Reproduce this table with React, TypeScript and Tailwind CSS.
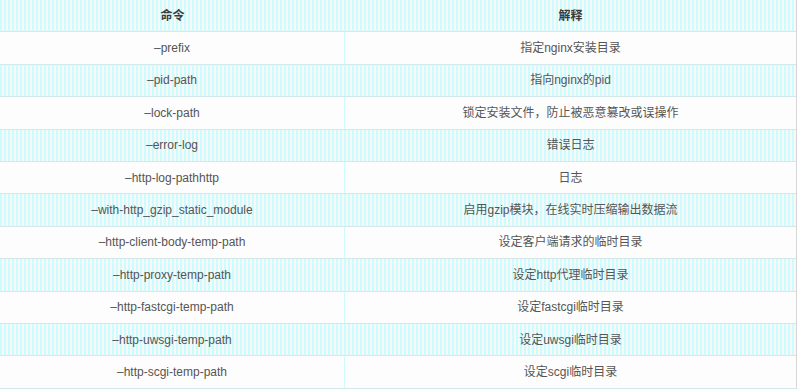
import React from "react";

const rows: [string, string][] = [
  ["–prefix", "指定nginx安装目录"],
  ["–pid-path", "指向nginx的pid"],
  ["–lock-path", "锁定安装文件，防止被恶意篡改或误操作"],
  ["–error-log", "错误日志"],
  ["–http-log-pathhttp", "日志"],
  ["–with-http_gzip_static_module", "启用gzip模块，在线实时压缩输出数据流"],
  ["–http-client-body-temp-path", "设定客户端请求的临时目录"],
  ["–http-proxy-temp-path", "设定http代理临时目录"],
  ["–http-fastcgi-temp-path", "设定fastcgi临时目录"],
  ["–http-uwsgi-temp-path", "设定uwsgi临时目录"],
  ["–http-scgi-temp-path", "设定scgi临时目录"],
];

const striped =
  "bg-[repeating-linear-gradient(90deg,#cdfcff_0px,#cdfcff_2px,#f7f9f9_2px,#f7f9f9_4px)]";

export default function App() {
  return (
    <div
      className="w-[800px] h-[389px] bg-white overflow-hidden"
      style={{ fontFamily: '"Liberation Sans", "Noto Sans CJK SC", sans-serif' }}
    >
      <div className="w-[797px] border-r border-[#d6d6d6]">
        <div
          className={`grid grid-cols-[345px_1fr] h-[32.4px] border-b border-[#d3e8ea] ${striped} text-[12px] font-bold text-[#3a3a3a]`}
        >
          <div className="flex items-center justify-center">命令</div>
          <div className="flex items-center justify-center">解释</div>
        </div>
        {rows.map(([a, b], i) => (
          <div
            key={i}
            className={`grid grid-cols-[345px_1fr] h-[32.4px] border-b border-[#d3e8ea] text-[12px] text-[#555] ${
              i % 2 === 1 ? striped : "bg-[#fdfdfd]"
            }`}
          >
            <div className="flex items-center justify-center border-r border-[#cdfcff]">{a}</div>
            <div className="flex items-center justify-center">{b}</div>
          </div>
        ))}
      </div>
    </div>
  );
}
